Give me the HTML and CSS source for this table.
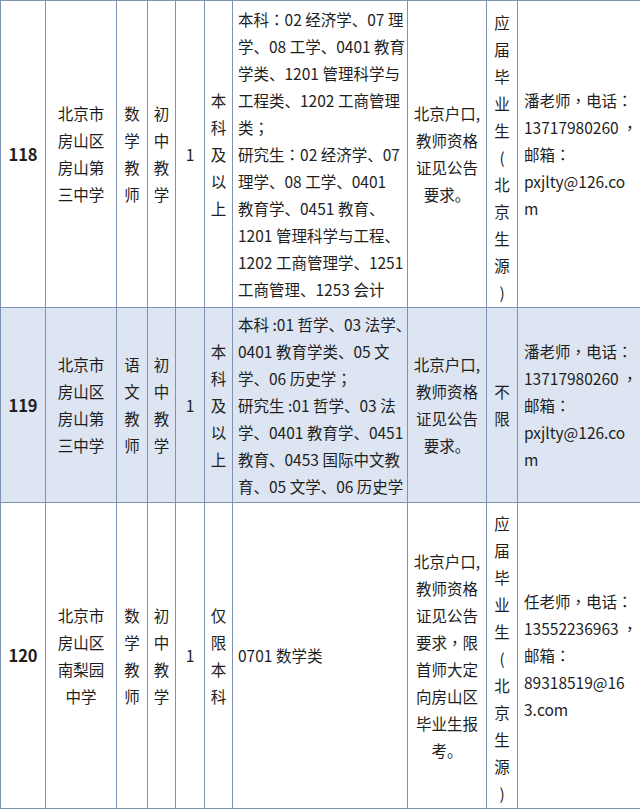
FILE: index.html
```html
<!DOCTYPE html>
<html lang="zh-CN">
<head>
<meta charset="utf-8">
<title>招聘岗位</title>
<link rel="stylesheet" href="styles.css">
</head>
<body>
<table class="jobs">
  <colgroup>
    <col class="c-no"><col class="c-unit"><col class="c-post"><col class="c-type"><col class="c-num"><col class="c-edu"><col class="c-major"><col class="c-req"><col class="c-src"><col class="c-contact">
  </colgroup>
  <tbody>
    <tr class="r1">
      <td class="no">118</td>
      <td class="ctr">北京市<br>房山区<br>房山第<br>三中学</td>
      <td class="ctr">数<br>学<br>教<br>师</td>
      <td class="ctr">初<br>中<br>教<br>学</td>
      <td class="ctr">1</td>
      <td class="ctr">本<br>科<br>及<br>以<br>上</td>
      <td class="major">本科<span class="pc" lang="zh-TW">：</span>02 经济学、07 理<br>学、08 工学、0401 教育<br>学类、1201 管理科学与<br>工程类、1202 工商管理<br>类<span class="pc" lang="zh-TW">；</span><br>研究生<span class="pc" lang="zh-TW">：</span>02 经济学、07<br>理学、08 工学、0401<br>教育学、0451 教育、<br>1201 管理科学与工程、<br>1202 工商管理学、1251<br>工商管理、1253 会计</td>
      <td class="ctr">北京户口,<br>教师资格<br>证见公告<br>要求。</td>
      <td class="ctr src">应<br>届<br>毕<br>业<br>生<br>(<br>北<br>京<br>生<br>源<br>)</td>
      <td class="contact">潘老师<span class="pc" lang="zh-TW">，</span>电话<span class="pc" lang="zh-TW">：</span><br>13717980260 <span class="pc" lang="zh-TW">，</span><br>邮箱<span class="pc" lang="zh-TW">：</span><br>pxjlty@126.co<br>m</td>
    </tr>
    <tr class="r2 shaded">
      <td class="no">119</td>
      <td class="ctr">北京市<br>房山区<br>房山第<br>三中学</td>
      <td class="ctr">语<br>文<br>教<br>师</td>
      <td class="ctr">初<br>中<br>教<br>学</td>
      <td class="ctr">1</td>
      <td class="ctr">本<br>科<br>及<br>以<br>上</td>
      <td class="major">本科 :01 哲学、03 法学、<br>0401 教育学类、05 文<br>学、06 历史学<span class="pc" lang="zh-TW">；</span><br>研究生 :01 哲学、03 法<br>学、0401 教育学、0451<br>教育、0453 国际中文教<br>育、05 文学、06 历史学</td>
      <td class="ctr">北京户口,<br>教师资格<br>证见公告<br>要求。</td>
      <td class="ctr">不<br>限</td>
      <td class="contact">潘老师<span class="pc" lang="zh-TW">，</span>电话<span class="pc" lang="zh-TW">：</span><br>13717980260 <span class="pc" lang="zh-TW">，</span><br>邮箱<span class="pc" lang="zh-TW">：</span><br>pxjlty@126.co<br>m</td>
    </tr>
    <tr class="r3">
      <td class="no">120</td>
      <td class="ctr">北京市<br>房山区<br>南梨园<br>中学</td>
      <td class="ctr">数<br>学<br>教<br>师</td>
      <td class="ctr">初<br>中<br>教<br>学</td>
      <td class="ctr">1</td>
      <td class="ctr">仅<br>限<br>本<br>科</td>
      <td class="major">0701 数学类</td>
      <td class="ctr">北京户口,<br>教师资格<br>证见公告<br>要求<span class="pc" lang="zh-TW">，</span>限<br>首师大定<br>向房山区<br>毕业生报<br>考。</td>
      <td class="ctr src">应<br>届<br>毕<br>业<br>生<br>(<br>北<br>京<br>生<br>源<br>)</td>
      <td class="contact">任老师<span class="pc" lang="zh-TW">，</span>电话<span class="pc" lang="zh-TW">：</span><br>13552236963 <span class="pc" lang="zh-TW">，</span><br>邮箱<span class="pc" lang="zh-TW">：</span><br>89318519@16<br>3.com</td>
    </tr>
  </tbody>
</table>
</body>
</html>
```

FILE: styles.css
```css
html, body {
  margin: 0;
  padding: 0;
  background: #ffffff;
}

body {
  font-family: "Noto Sans CJK SC", "Noto Sans", sans-serif;
  font-size: 15.5px;
  color: #1e1e1e;
}

.jobs {
  width: 640px;
  border-collapse: collapse;
  table-layout: fixed;
}

.jobs td {
  border: 1px solid #7f92b2;
  padding: 0;
  line-height: 27px;
  vertical-align: middle;
  white-space: nowrap;
  overflow: visible;
}

.c-no { width: 45px; }
.c-unit { width: 71px; }
.c-post { width: 31px; }
.c-type { width: 28px; }
.c-num { width: 29px; }
.c-edu { width: 28px; }
.c-major { width: 175px; }
.c-req { width: 79px; }
.c-src { width: 31px; }
.c-contact { width: 123px; }

.r1 { height: 307px; }
.r2 { height: 195px; }
.r3 { height: 306px; }

.shaded td {
  background: #dce5f1;
}

.no {
  text-align: center;
  font-weight: bold;
  font-size: 16.5px;
}

.ctr {
  text-align: center;
}

.src {
  padding-top: 6px !important;
}

.major {
  text-align: left;
  padding-left: 5px !important;
}

.contact {
  text-align: left;
  padding-left: 6px !important;
}

.pc {
  font-family: "Noto Sans CJK TC", "Noto Sans CJK SC", sans-serif;
}
```
